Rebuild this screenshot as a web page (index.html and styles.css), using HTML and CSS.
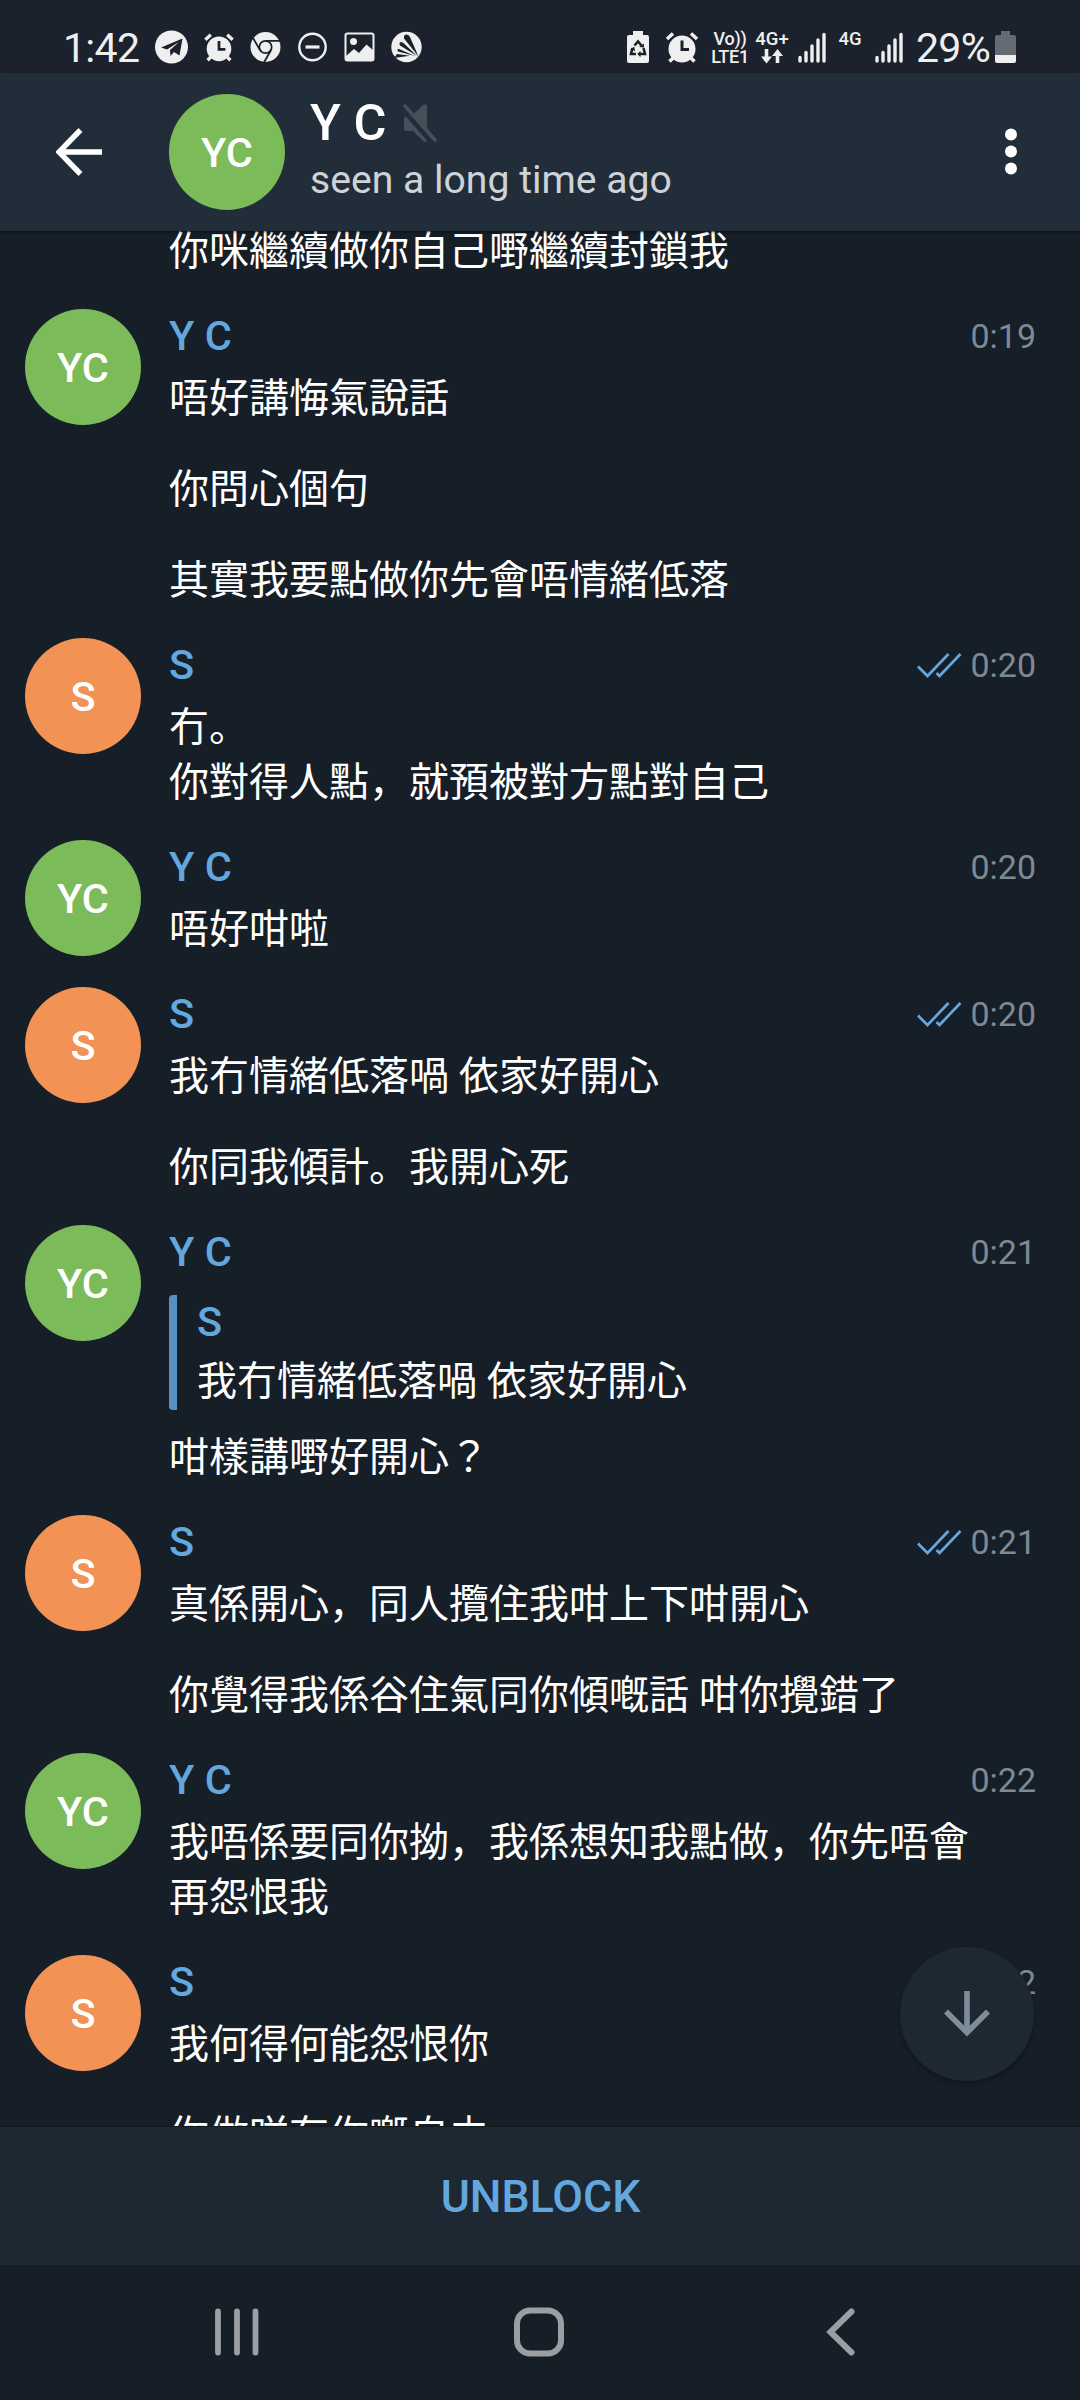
FILE: index.html
```html
<!DOCTYPE html>
<html lang="ja">
<head>
<meta charset="utf-8">
<title>Y C</title>
<link rel="stylesheet" href="styles.css">
</head>
<body>
<svg class="defs" aria-hidden="true">
  <symbol id="checks" viewBox="0 0 46 28">
    <path d="M2 15.500 L11.500 25 L32.500 3 M20.500 22 L23.500 25 L44.500 3" fill="none" stroke="currentColor" stroke-width="2.700"/>
  </symbol>
  <symbol id="alarm" viewBox="0 0 34 32">
    <circle cx="17" cy="18" r="13.500" fill="currentColor"/>
    <path d="M2 8 L8 2.500 M32 8 L26 2.500 M8 27 L4.500 30.500 M26 27 L29.500 30.500" stroke="currentColor" stroke-width="3.600" fill="none"/>
    <path d="M17 9.500 V18.500 H24" stroke="#1b222d" stroke-width="3" fill="none"/>
  </symbol>
  <symbol id="signal" viewBox="0 0 28 31">
    <path d="M2 25.500 V29 M8 20.500 V29 M14 14 V29 M20 8 V29 M26 2.500 V29" stroke="currentColor" stroke-width="3.400" stroke-linecap="round" fill="none"/>
  </symbol>
</svg>
<div class="screen">
  <div class="status">
    <span class="clock">1:42</span>
    <div class="notifs">
      <svg viewBox="0 0 47 34"><circle cx="23.500" cy="17" r="16.500" fill="currentColor"/><path d="M13 17.500 L34.500 8.500 L31.500 25.500 L26 22 L22.500 26 L22 20 L31 12 L19 19.500 Z" fill="#1b222d"/></svg>
      <svg viewBox="0 0 47 34"><use href="#alarm" x="8.500" y="2" width="31" height="30"/></svg>
      <svg viewBox="0 0 47 34"><circle cx="23.500" cy="17" r="15" fill="currentColor"/><g fill="none" stroke="#1b222d" stroke-width="1.800"><circle cx="23.500" cy="17" r="6.200"/><path d="M23.500 10.800 H38 M18.200 20.200 L11 8 M28.900 20.200 L22 32.500"/></g></svg>
      <svg viewBox="0 0 47 34"><circle cx="23.500" cy="17" r="13.200" fill="none" stroke="currentColor" stroke-width="2.400"/><path d="M16.500 17 H30.500" stroke="currentColor" stroke-width="3.200"/></svg>
      <svg viewBox="0 0 47 34"><rect x="9.500" y="3.500" width="28" height="27" rx="2" fill="none" stroke="currentColor" stroke-width="2"/><circle cx="17.500" cy="11.500" r="3.500" fill="currentColor"/><path d="M10 26 L18 19 L23 23 L30.500 14.500 L38 21 V31 H10 Z" fill="currentColor"/></svg>
      <svg viewBox="0 0 47 34"><circle cx="23.500" cy="17" r="15.200" fill="currentColor"/><path d="M35.500 26.500 L21 8.500 Q20.500 4.500 23.500 4.500 Q26 4.500 27 7 Z M34 26 L17 15.500 Q15.500 12.500 18 12 Q19.500 12 21 13.500 Z M32 26 L15 21.500 Q13.500 19.500 15.500 18.800 Z M27 25.800 L11 28 L14 24 Z" fill="#1b222d"/></svg>
    </div>
    <div class="indicators">
      <svg class="recycle" viewBox="0 0 22 32"><path d="M6 0 H16 V4 H20 Q22 4 22 6 V30 Q22 32 20 32 H2 Q0 32 0 30 V6 Q0 4 2 4 H6 Z" fill="currentColor"/><path d="M7.500 14.500 L11 10.500 L14.500 14.500 M16.500 17 L18 23 H13 M9 23 H4 L5.500 17" fill="none" stroke="#1b222d" stroke-width="2.600"/><path d="M12 16 L17 16.500 L17 12.500 Z M13.500 19.800 L10.300 23 L13.500 26.200 Z M3.300 18.500 L8 20 L7.200 15.500 Z" fill="#1b222d"/></svg>
      <svg class="alarm"><use href="#alarm"/></svg>
      <span class="volte"><span>Vo))</span><span>LTE1</span></span>
      <span class="net">
        <span>4G+</span>
        <svg viewBox="0 0 22 15"><path d="M5.500 0 V12 M16.500 3 V14" stroke="currentColor" stroke-width="3.600"/><path d="M0 7.500 L5.500 14.500 L11 7.500 Z M11 7 L16.500 0 L22 7 Z" fill="currentColor"/></svg>
      </span>
      <svg class="signal first"><use href="#signal"/></svg>
      <span class="net second"><span>4G</span></span>
      <svg class="signal"><use href="#signal"/></svg>
      <span class="percent">29%</span>
      <svg class="battery" viewBox="0 0 21 32"><path d="M6 0 H15 V4 H19 Q21 4 21 6 V24 H0 V6 Q0 4 2 4 H6 Z" fill="#656b73"/><path d="M0 24 H21 V30 Q21 32 19 32 H2 Q0 32 0 30 Z" fill="currentColor"/></svg>
    </div>
  </div>

  <header class="topbar">
    <svg class="back" viewBox="0 0 46 48"><path d="M46 24 H4 M24.500 2 L3 24 L24.500 46" fill="none" stroke="currentColor" stroke-width="5.400"/></svg>
    <div class="avatar green">YC</div>
    <div class="peer">
      <div class="title"><span>Y C</span>
        <svg viewBox="0 0 34 40"><path d="M22 1.500 Q24 1.500 24 3.500 V25 L11 10.500 L19.500 2.500 Q20.500 1.500 22 1.500 Z M2.500 13 L24 37.500 Q22 40 20 38 L10 28 H3 Q1 28 1 26 V15 Z" fill="currentColor"/><path d="M2 3 L32 37" stroke="currentColor" stroke-width="3.600" stroke-linecap="round"/></svg>
      </div>
      <div class="seen">seen a long time ago</div>
    </div>
    <svg class="more" viewBox="0 0 12 48"><g fill="currentColor"><circle cx="6" cy="6.500" r="6"/><circle cx="6" cy="23.500" r="6"/><circle cx="6" cy="40.500" r="6"/></g></svg>
  </header>

  <main class="chat">
    <div class="log">
      <section class="group tail"><div class="content"><p>你咪繼續做你自己嘢繼續封鎖我</p></div></section>

      <section class="group">
        <div class="avatar green">YC</div>
        <div class="content">
          <div class="head"><b>Y C</b><time>0:19</time></div>
          <p>唔好講悔氣說話</p>
          <p>你問心個句</p>
          <p>其實我要點做你先會唔情緒低落</p>
        </div>
      </section>

      <section class="group">
        <div class="avatar orange">S</div>
        <div class="content">
          <div class="head"><b>S</b><svg><use href="#checks"/></svg><time>0:20</time></div>
          <p>冇。<br>你對得人點，就預被對方點對自己</p>
        </div>
      </section>

      <section class="group">
        <div class="avatar green">YC</div>
        <div class="content">
          <div class="head"><b>Y C</b><time>0:20</time></div>
          <p>唔好咁啦</p>
        </div>
      </section>

      <section class="group">
        <div class="avatar orange">S</div>
        <div class="content">
          <div class="head"><b>S</b><svg><use href="#checks"/></svg><time>0:20</time></div>
          <p>我冇情緒低落喎 依家好開心</p>
          <p>你同我傾計。我開心死</p>
        </div>
      </section>

      <section class="group">
        <div class="avatar green">YC</div>
        <div class="content">
          <div class="head"><b>Y C</b><time>0:21</time></div>
          <blockquote class="reply"><b>S</b><span>我冇情緒低落喎 依家好開心</span></blockquote>
          <p class="after-reply">咁樣講嘢好開心？</p>
        </div>
      </section>

      <section class="group">
        <div class="avatar orange">S</div>
        <div class="content">
          <div class="head"><b>S</b><svg><use href="#checks"/></svg><time>0:21</time></div>
          <p>真係開心，同人攬住我咁上下咁開心</p>
          <p>你覺得我係谷住氣同你傾嘅話 咁你攪錯了</p>
        </div>
      </section>

      <section class="group">
        <div class="avatar green">YC</div>
        <div class="content">
          <div class="head"><b>Y C</b><time>0:22</time></div>
          <p>我唔係要同你拗，我係想知我點做，你先唔會<br>再怨恨我</p>
        </div>
      </section>

      <section class="group">
        <div class="avatar orange">S</div>
        <div class="content">
          <div class="head"><b>S</b><svg><use href="#checks"/></svg><time>0:22</time></div>
          <p>我何得何能怨恨你</p>
          <p>你做咩有你嘅自由</p>
        </div>
      </section>
    </div>
    <div class="to-bottom"><svg viewBox="0 0 46 46"><path d="M23 0 V40 M2 20.500 L23 41.500 L44 20.500" fill="none" stroke="currentColor" stroke-width="5.600"/></svg></div>
  </main>

  <div class="action">UNBLOCK</div>

  <nav class="nav">
    <svg viewBox="0 0 60 60"><path d="M11 9.500 V50.500 M30 9.500 V50.500 M48.500 9.500 V50.500" stroke="currentColor" stroke-width="5.800" stroke-linecap="round"/></svg>
    <svg viewBox="0 0 60 60"><rect x="8" y="8.500" width="44" height="43" rx="13" fill="none" stroke="currentColor" stroke-width="6"/></svg>
    <svg viewBox="0 0 60 60"><path d="M41.500 9.500 L20.500 30 L41.500 50.500" fill="none" stroke="currentColor" stroke-width="6" stroke-linecap="round"/></svg>
  </nav>
</div>
</body>
</html>
```
FILE: styles.css
```css
* { box-sizing: border-box; }

body {
  margin: 0;
  background: #161e27;
  color: #fff;
  font-family: Roboto, "Noto Sans CJK JP", sans-serif;
}

svg { display: block; flex: none; }
.defs { display: none; }
b { font-weight: 500; }

.screen {
  display: flex;
  flex-direction: column;
  width: 1080px;
  height: 2400px;
  overflow: hidden;
}

.status {
  display: flex;
  align-items: center;
  flex: none;
  height: 73px;
  padding: 21px 64px 0 63px;
  background: #1b222d;
  color: #efefef;
}
.clock, .percent { font-size: 41px; line-height: 48px; padding-top: 2px; letter-spacing: -.7px; }
.clock { width: 85px; }
.notifs { display: flex; }
.notifs svg { width: 47px; height: 34px; }
.indicators { display: flex; align-items: center; margin-left: auto; }
.recycle { width: 22px; height: 32px; }
.alarm { width: 34px; height: 32px; margin-left: 16px; }
.volte {
  display: flex;
  flex-direction: column;
  align-items: center;
  gap: 1px;
  width: 38px;
  margin-left: 12px;
  font-size: 18px;
  font-weight: 500;
  line-height: 17px;
  letter-spacing: -.3px;
}
.net {
  display: flex;
  flex-direction: column;
  align-items: center;
  gap: 2px;
  width: 30px;
  height: 33px;
  margin-left: 8px;
  font-size: 18.500px;
  font-weight: 500;
  line-height: 16px;
}
.net svg { width: 22px; height: 15px; }
.net.second { width: 24px; margin-left: 12px; }
.signal { width: 28px; height: 31px; margin-left: 13px; }
.signal.first { margin-left: 11px; }
.percent { width: 73px; margin-left: 13px; }
.battery { width: 21px; height: 32px; margin-left: 6px; }

.topbar {
  display: flex;
  align-items: center;
  flex: none;
  height: 158px;
  padding: 0 63px 0 56px;
  background: #222d3a;
  position: relative;
  z-index: 1;
  box-shadow: 0 1px 3px rgba(0, 0, 0, .5);
}
.back { width: 46px; height: 48px; margin-right: 67px; }
.peer { margin-left: 25px; padding-bottom: 3px; }
.title { display: flex; align-items: center; gap: 17px; font-size: 50.500px; font-weight: 500; line-height: 58px; }
.title svg { width: 34px; height: 40px; color: #44515b; }
.seen { color: #cfd3d8; font-size: 39.150px; line-height: 56px; }
.more { width: 12px; height: 48px; margin-left: auto; }

.avatar {
  display: flex;
  align-items: center;
  justify-content: center;
  flex: none;
  width: 116px;
  height: 116px;
  border-radius: 50%;
  font-size: 41.500px;
  font-weight: 500;
}
.green { background: #7bbb59; }
.orange { background: #f29255; }

.chat { position: relative; flex: none; height: 1895px; overflow: hidden; }
.log { display: flex; flex-direction: column; gap: 30px; margin-top: -7px; }
.group { display: flex; gap: 28px; padding: 0 44px 0 25px; }
.group.tail { padding-left: 169px; }
.content { flex: 1; }
.head { display: flex; align-items: center; height: 53px; margin-bottom: 9px; color: #63a7df; }
.head b { margin-right: auto; font-size: 41.500px; }
.head svg { width: 46px; height: 28px; margin-right: 8px; }
.head time { color: #7c8a95; font-size: 34px; }
p { margin: 0; font-size: 40px; line-height: 55px; white-space: nowrap; }
p + p { margin-top: 36px; }

.reply {
  display: flex;
  flex-direction: column;
  height: 115px;
  margin: 17px 0 0;
  padding-left: 28px;
  border-radius: 4px;
  background: linear-gradient(#5791c1, #5791c1) left / 8px 100% no-repeat;
  font-size: 40px;
}
.reply b { color: #63a7df; font-size: 41.500px; line-height: 54px; }
.reply span { line-height: 66px; white-space: nowrap; }
.head:has(+ .reply) { margin-bottom: 0; }
.after-reply { margin-top: 20px; }

.to-bottom {
  position: absolute;
  right: 46px;
  bottom: 45px;
  display: flex;
  align-items: center;
  justify-content: center;
  width: 134px;
  height: 134px;
  border-radius: 50%;
  background: #1e2833;
  color: #7e8e99;
  box-shadow: 0 3px 5px rgba(0, 0, 0, .3);
}
.to-bottom svg { width: 46px; height: 46px; }

.action {
  display: flex;
  align-items: center;
  justify-content: center;
  flex: none;
  height: 139px;
  padding: 2px 0 0 1px;
  border-top: 1px solid #10171f;
  background: #1e2833;
  color: #63a7df;
  font-size: 44.600px;
  font-weight: 500;
}

.nav {
  display: flex;
  align-items: center;
  justify-content: space-between;
  flex: 1;
  padding: 0 210px 2px 207px;
  color: #9b9ea2;
}
.nav svg { width: 60px; height: 60px; }
```
